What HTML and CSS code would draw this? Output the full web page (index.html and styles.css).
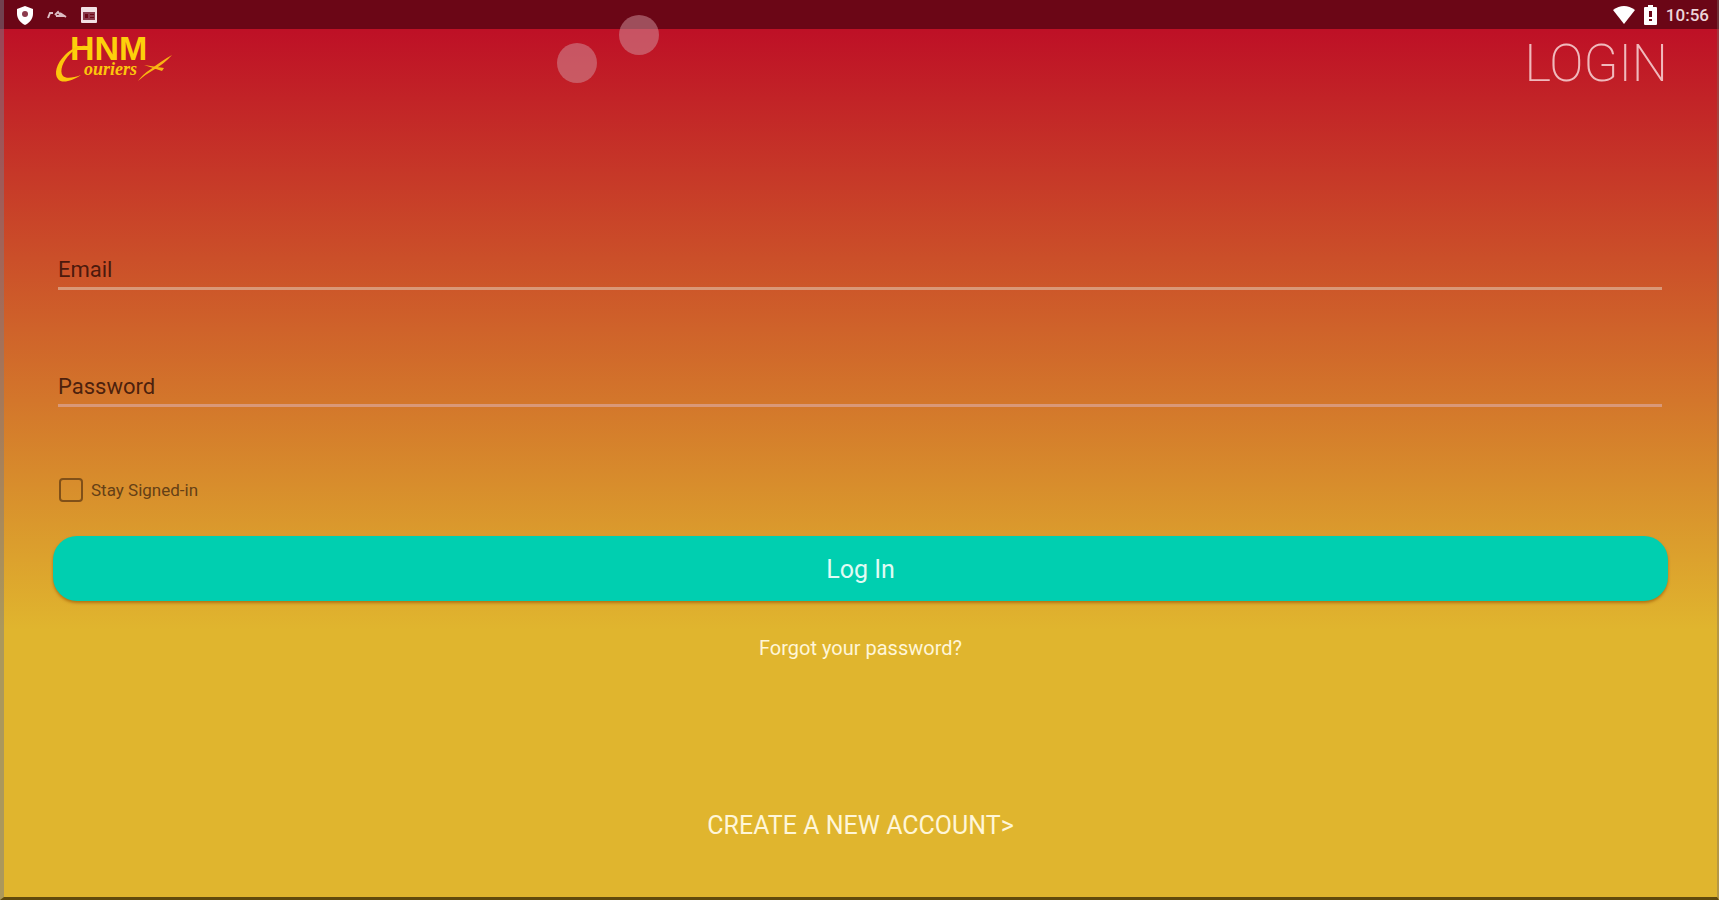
FILE: index.html
```html
<!DOCTYPE html>
<html lang="en">
<head>
    <meta charset="utf-8">
    <title>HNM Couriers - Login</title>
    <link rel="stylesheet" href="styles.css">
</head>
<body>
    <div class="statusbar">
        <div class="status_left">
            <svg width="18" height="20" viewBox="0 0 18 20"><path d="M9 1L17 4V9C17 14 13 18 9 20C5 18 1 14 1 9V4Z" fill="#fff"/><circle cx="9" cy="9" r="3" fill="#8b3a4c"/></svg>
            <svg width="20" height="20" viewBox="0 0 20 20"><path d="M1 13L3 8H6M8 10L11 7L14 11M13 8L19 12M9 11H18" fill="none" stroke="#dcbcc3" stroke-width="2"/></svg>
            <svg width="18" height="18" viewBox="0 0 18 18"><rect x="1" y="1" width="16" height="16" rx="1" fill="#f2e0e4"/><path d="M3 6H15V14H3Z" fill="#8b3a4c"/><path d="M5 8H8V12H5ZM10 8H14V9H10ZM10 11H14V12H10Z" fill="#6b0616"/></svg>
        </div>
        <div class="status_right">
            <svg width="22" height="18" viewBox="0 0 22 18"><path d="M0 4Q11 -4 22 4L11 18Z" fill="#fff"/></svg>
            <svg width="13" height="20" viewBox="0 0 13 20"><path d="M4 0H9V2H12Q13 2 13 3V19Q13 20 12 20H1Q0 20 0 19V3Q0 2 1 2H4Z" fill="#fff"/><path d="M5 6H8V12H5ZM5 14H8V16H5Z" fill="#6b0616"/></svg>
            <span>10:56</span>
        </div>
    </div>
    <main class="container_main">
        <header class="header">
            <svg class="logo" width="120" height="60" viewBox="0 0 120 60" role="img" aria-label="HNM Couriers">
                <text class="logo_name" x="17" y="31">HNM</text>
                <text class="logo_script" x="31" y="46">ouriers</text>
                <path d="M33 17C26 16 18 20 12 26C3 35 1 45 5 50C9 55 19 52 28 46C20 49 13 50 10 47C6 42 10 32 17 25C22 20 27 18 33 17Z" fill="#fdc60b"/>
                <path d="M85 52Q90 45 98 40Q110 31 119 26Q112 34 102 40Q93 45 85 52ZM91 36L111 39L109 42Z" fill="#f9b512"/>
            </svg>
            <h1 class="title">LOGIN</h1>
        </header>
        <form class="form_login">
            <input class="input_text" type="email" aria-label="Email" placeholder="Email">
            <input class="input_text" type="password" aria-label="Password" placeholder="Password">
            <div class="container_stay">
                <input class="input_stay" type="checkbox" id="input_stay">
                <label for="input_stay">Stay Signed-in</label>
            </div>
            <button class="button_login" type="button">Log In</button>
        </form>
        <a class="link_forgot" href="#">Forgot your password?</a>
        <a class="link_create" href="#">CREATE A NEW ACCOUNT&gt;</a>
    </main>
    <div class="touch touch_first"></div>
    <div class="touch touch_second"></div>
</body>
</html>
```
FILE: styles.css
```css
* {
    box-sizing: border-box;
    font-family: Roboto, sans-serif;
}
body {
    display: flex;
    flex-direction: column;
    min-height: 100vh;
    margin: 0;
    background: linear-gradient(#be1026 29px, #e0b52e 630px);
}
/* edges of the device screen */
body::after {
    content: "";
    position: fixed;
    inset: 0;
    border-left: 4px solid rgba(120, 125, 135, 0.5);
    border-right: 2px solid rgba(120, 110, 100, 0.4);
    border-bottom: 3px solid #614a0d;
    pointer-events: none;
}
.statusbar {
    display: flex;
    justify-content: space-between;
    align-items: center;
    height: 29px;
    padding: 0 10px 0 16px;
    background: #6b0616;
}
.status_left {
    display: flex;
    align-items: center;
    gap: 13px;
}
.status_right {
    display: flex;
    align-items: center;
    gap: 9px;
    color: #ecd5d9;
    font-size: 17px;
    font-weight: 500;
}
.container_main {
    display: flex;
    flex-direction: column;
    align-items: center;
    padding: 0 51px 0 53px;
}
.header {
    display: flex;
    justify-content: space-between;
    width: 100%;
    height: 68px;
}
.logo_name {
    fill: #fdd00b;
    font-family: "Liberation Sans", sans-serif;
    font-size: 34px;
    font-weight: 700;
}
.logo_script {
    fill: #fdc60b;
    font-family: "Liberation Serif", serif;
    font-size: 18px;
    font-style: italic;
    font-weight: 700;
}
.title {
    margin: 5px 0 0;
    color: #f0b9bc;
    font-size: 51px;
    font-weight: 200;
    line-height: 60px;
}
.form_login {
    display: flex;
    flex-direction: column;
    width: 100%;
    padding-top: 145px;
}
.input_text {
    height: 48px;
    margin: 0 6px 69px 5px;
    padding: 10px 0 0;
    border: none;
    border-bottom: 3px solid #d99878;
    outline: none;
    background: none;
    color: #3c1c10;
    font-size: 22px;
}
.input_text::placeholder {
    color: rgba(40, 10, 5, 0.8);
}
.container_stay {
    display: flex;
    align-items: center;
    gap: 8px;
    height: 24px;
    margin: 2px 6px 34px;
    color: #654016;
    font-size: 17px;
}
.input_stay {
    appearance: none;
    width: 24px;
    height: 24px;
    margin: 0;
    border: 2px solid #805018;
    border-radius: 4px;
}
.button_login {
    height: 65px;
    padding: 2px 0 0;
    border: none;
    border-radius: 24px;
    background: #00cfb0;
    box-shadow: 0 2px 3px rgba(150, 80, 0, 0.6);
    color: #e0fbf4;
    font-size: 25px;
}
.link_forgot {
    margin-top: 34px;
    color: #fff6d8;
    font-size: 20px;
    line-height: 26px;
    text-decoration: none;
}
.link_create {
    margin-top: 150px;
    color: #fff6d8;
    font-size: 25px;
    line-height: 30px;
    text-decoration: none;
}
/* finger marks shown over the page */
.touch {
    position: absolute;
    width: 40px;
    height: 40px;
    border-radius: 50%;
    background: rgba(210, 150, 160, 0.5);
}
.touch_first {
    top: 43px;
    left: 557px;
}
.touch_second {
    top: 15px;
    left: 619px;
}
```
